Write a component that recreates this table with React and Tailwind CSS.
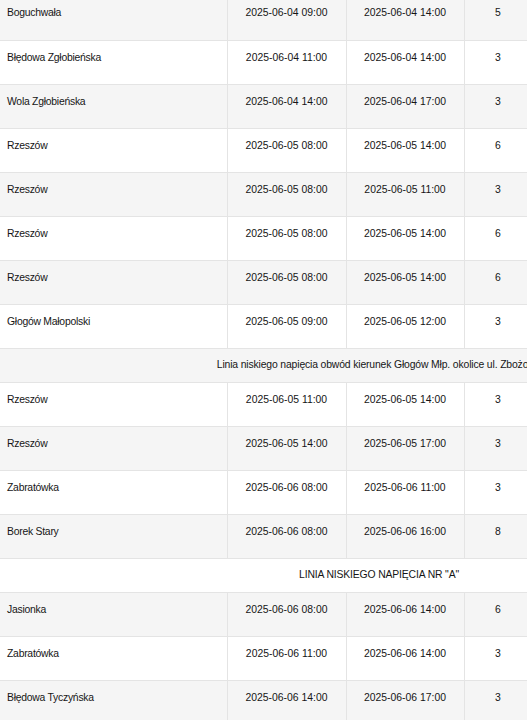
const rows = [
  { place: 'Boguchwała', from: '2025-06-04 09:00', to: '2025-06-04 14:00', hours: 5 },
  { place: 'Błędowa Zgłobieńska', from: '2025-06-04 11:00', to: '2025-06-04 14:00', hours: 3 },
  { place: 'Wola Zgłobieńska', from: '2025-06-04 14:00', to: '2025-06-04 17:00', hours: 3 },
  { place: 'Rzeszów', from: '2025-06-05 08:00', to: '2025-06-05 14:00', hours: 6 },
  { place: 'Rzeszów', from: '2025-06-05 08:00', to: '2025-06-05 11:00', hours: 3 },
  { place: 'Rzeszów', from: '2025-06-05 08:00', to: '2025-06-05 14:00', hours: 6 },
  { place: 'Rzeszów', from: '2025-06-05 08:00', to: '2025-06-05 14:00', hours: 6 },
  { place: 'Głogów Małopolski', from: '2025-06-05 09:00', to: '2025-06-05 12:00', hours: 3 },
  { note: 'Linia niskiego napięcia obwód kierunek Głogów Młp. okolice ul. Zbożowa' },
  { place: 'Rzeszów', from: '2025-06-05 11:00', to: '2025-06-05 14:00', hours: 3 },
  { place: 'Rzeszów', from: '2025-06-05 14:00', to: '2025-06-05 17:00', hours: 3 },
  { place: 'Zabratówka', from: '2025-06-06 08:00', to: '2025-06-06 11:00', hours: 3 },
  { place: 'Borek Stary', from: '2025-06-06 08:00', to: '2025-06-06 16:00', hours: 8 },
  { note: 'LINIA NISKIEGO NAPIĘCIA NR "A"' },
  { place: 'Jasionka', from: '2025-06-06 08:00', to: '2025-06-06 14:00', hours: 6 },
  { place: 'Zabratówka', from: '2025-06-06 11:00', to: '2025-06-06 14:00', hours: 3 },
  { place: 'Błędowa Tyczyńska', from: '2025-06-06 14:00', to: '2025-06-06 17:00', hours: 3 },
];

export default function App() {
  return (
    <div className="h-[720px] w-full overflow-hidden bg-white">
      <table
        className="-mt-[4px] w-[758px] table-fixed border-collapse text-[10.4px] leading-4 text-[#151515]"
        style={{ fontFamily: '"Liberation Sans", Arial, sans-serif' }}
      >
        <colgroup>
          <col className="w-[227px]" />
          <col className="w-[119px]" />
          <col className="w-[118px]" />
          <col className="w-[68px]" />
          <col />
        </colgroup>
        <tbody>
          {rows.map((r, i) => {
            const bg = i % 2 === 0 ? 'bg-[#f5f5f5]' : 'bg-white';
            if (r.note) {
              return (
                <tr key={i} className={`${bg} h-[33.5px] border-b border-[#e4e4e4]`}>
                  <td colSpan={5} className="px-2 pt-2 pb-[9px] align-top text-center whitespace-nowrap tracking-[-0.15px]">
                    {r.note}
                  </td>
                </tr>
              );
            }
            return (
              <tr key={i} className={`${bg} h-[44px] border-b border-[#e4e4e4]`}>
                <td className="border-r border-[#e4e4e4] px-[7px] pt-[9px] align-top tracking-[-0.25px]">{r.place}</td>
                <td className="border-r border-[#e4e4e4] px-2 pt-[9px] align-top text-center">{r.from}</td>
                <td className="border-r border-[#e4e4e4] px-2 pt-[9px] align-top text-center">{r.to}</td>
                <td className="border-r border-[#e4e4e4] px-2 pt-[9px] align-top text-center">{r.hours}</td>
                <td className="px-2 pt-[9px] align-top"></td>
              </tr>
            );
          })}
        </tbody>
      </table>
    </div>
  );
}
